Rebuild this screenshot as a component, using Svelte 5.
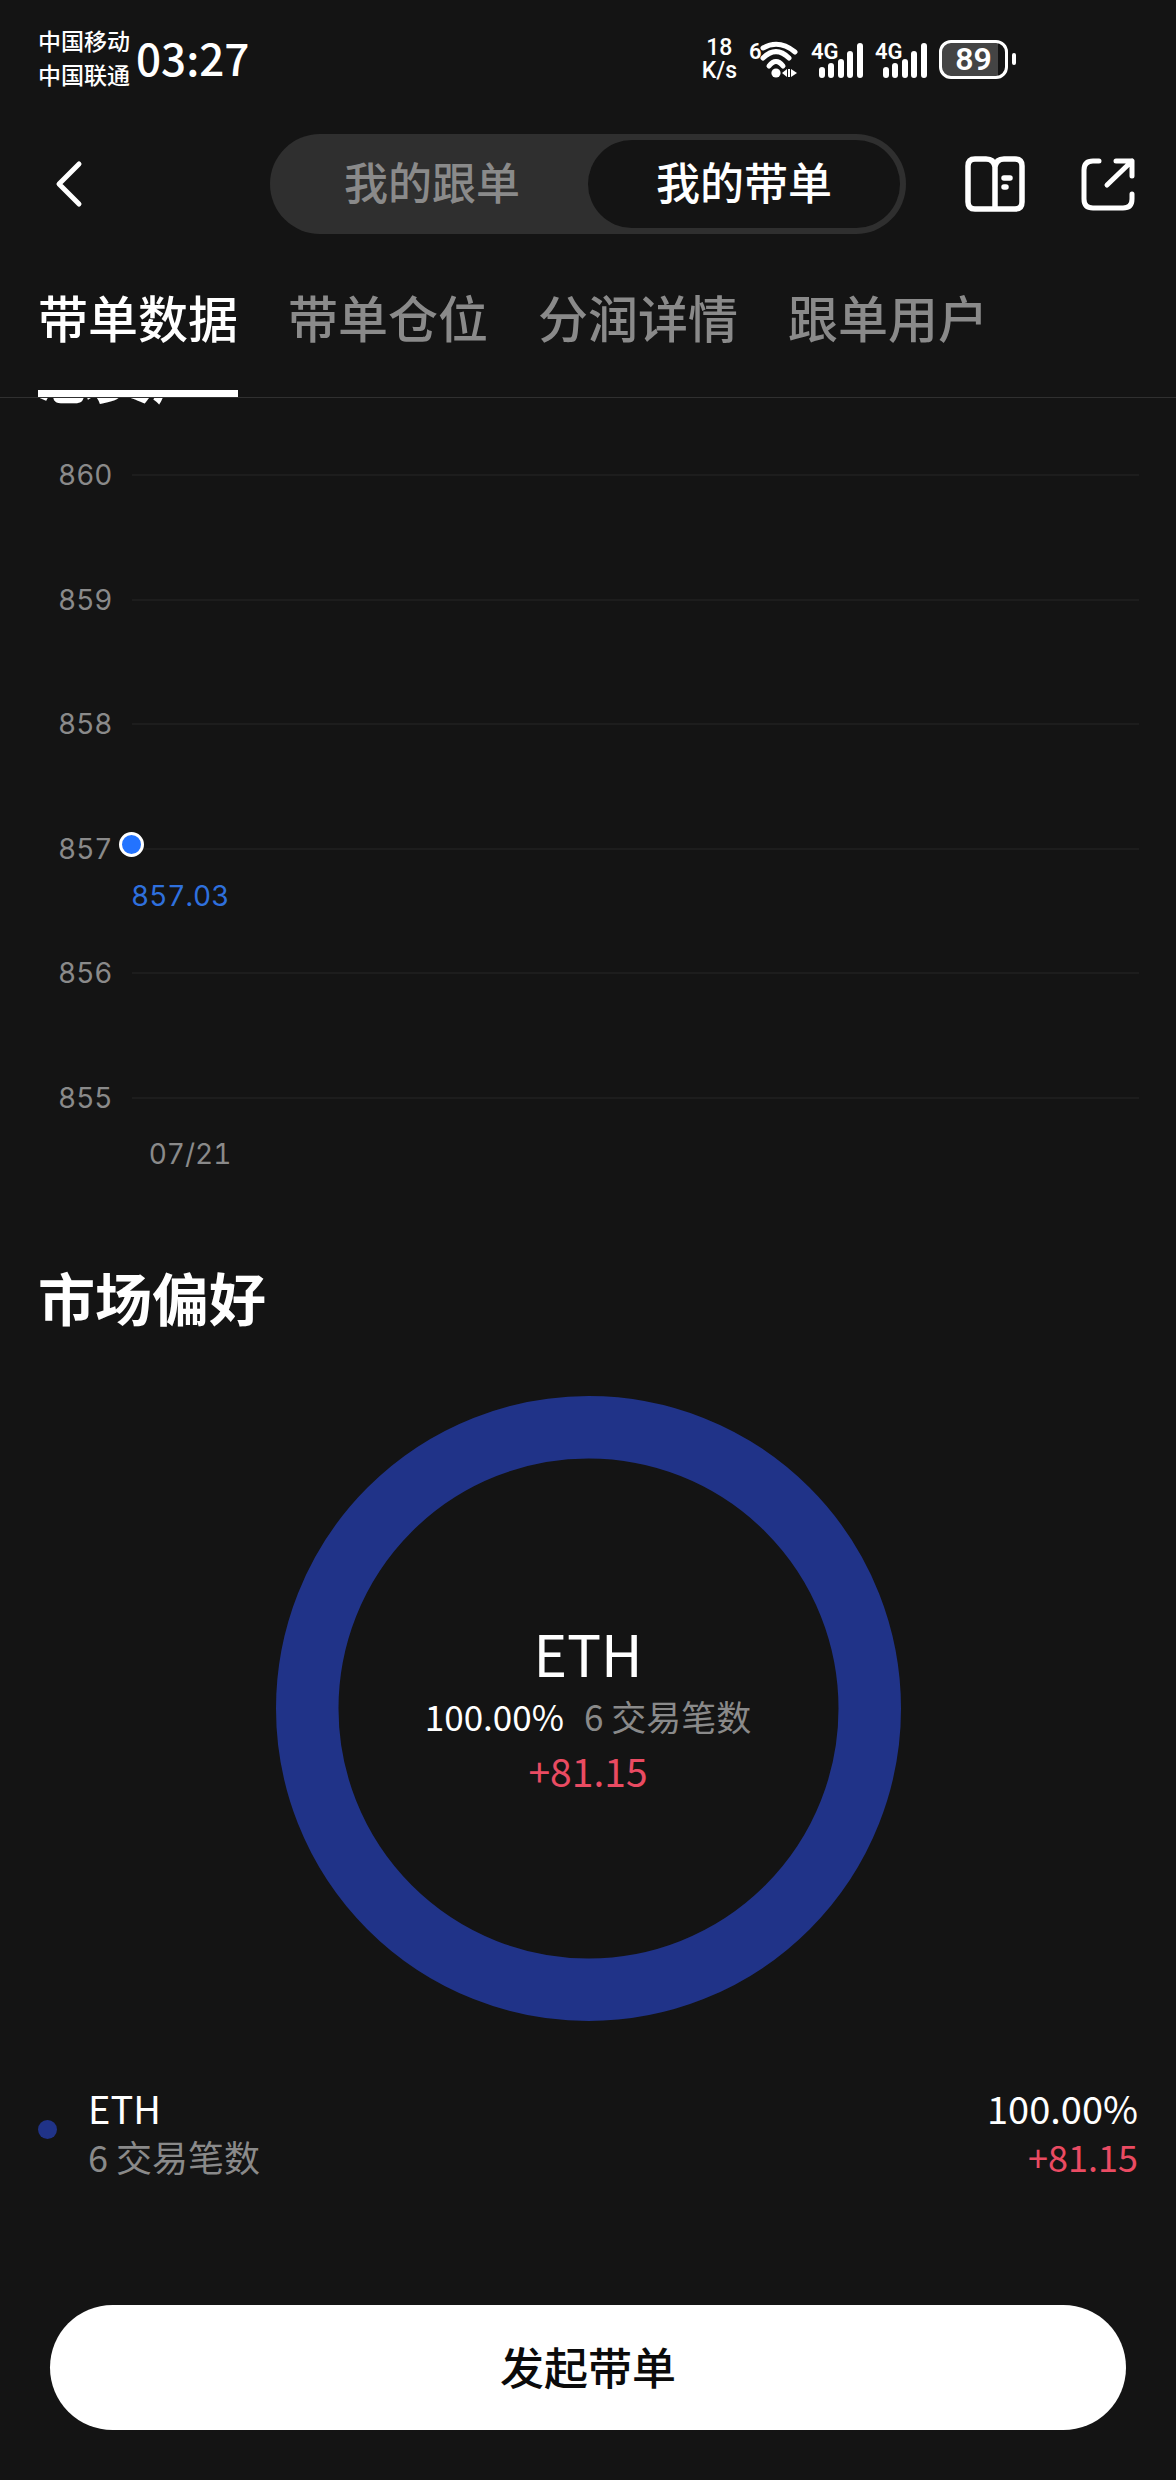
<script lang="ts">
  const topTabs = ['我的跟单', '我的带单'];
  const subTabs = ['带单数据', '带单仓位', '分润详情', '跟单用户'];
  const ticks = [860, 859, 858, 857, 856, 855];
  const point = { date: '07/21', value: 857.03 };
  const markets = [
    { name: 'ETH', share: '100.00%', trades: 6, pnl: '+81.15', color: '#203388' },
  ];

  let topTab = $state(1);
  let subTab = $state(0);

  const max = ticks[0];
  const min = ticks[ticks.length - 1];
  const pointTop = ((max - point.value) / (max - min)) * 100;
</script>

{#snippet signal()}
  <svg class="signal" width="52" height="38" viewBox="0 0 52 38" aria-hidden="true">
    <text x="0" y="19">4G</text>
    <path d="M11 30v5M20 26v9M30 22v13M39 14v21M49 6v29" fill="none" stroke="#fff" stroke-width="6" stroke-linecap="round" />
  </svg>
{/snippet}

<div class="app">
  <div class="status-bar">
    <div class="carriers">
      <span>中国移动</span>
      <span>中国联通</span>
    </div>
    <time class="clock">03:27</time>
    <div class="status-icons">
      <div class="net-speed">
        <span>18</span>
        <span>K/s</span>
      </div>
      <svg class="wifi" width="50" height="38" viewBox="0 0 50 38" aria-hidden="true">
        <text x="0" y="19">6</text>
        <g fill="none" stroke="#fff" stroke-width="5" stroke-linecap="round">
          <path d="M14 8Q30-1 46 12" />
          <path d="M14 18Q27 5 40 18" />
          <path d="M20 26Q27 17 34 26" />
        </g>
        <circle cx="27" cy="33" r="4.600" fill="#fff" />
        <path d="M38 29v8l-5-4zM39 29h2v8h-2zM42 29l6 4-6 4z" fill="#fff" />
      </svg>
      {@render signal()}
      {@render signal()}
      <div class="battery">
        <span>89</span>
      </div>
    </div>
  </div>

  <header class="header">
    <button class="icon-btn" aria-label="返回">
      <svg width="46" height="48" viewBox="0 0 46 48" fill="none" stroke="#fff" stroke-width="5" stroke-linecap="round" stroke-linejoin="round">
        <path d="M38 4 18 24l20 20" />
      </svg>
    </button>
    <div class="segment">
      {#each topTabs as label, i}
        <button class:active={topTab === i} onclick={() => (topTab = i)}>{label}</button>
      {/each}
    </div>
    <div class="actions">
      <button class="icon-btn" aria-label="指南">
        <svg width="60" height="56" viewBox="0 0 60 56" fill="none" stroke="#fff" stroke-width="5.500" stroke-linecap="round" stroke-linejoin="round">
          <path d="M30 11Q29 3 21 3H10Q3 3 3 10v36q0 7 7 7h40q7 0 7-7V10q0-7-7-7H39Q31 3 30 11v42M39 22h6M39 31h2" />
        </svg>
      </button>
      <button class="icon-btn" aria-label="分享">
        <svg width="54" height="56" viewBox="0 0 54 56" fill="none" stroke="#fff" stroke-width="5" stroke-linecap="round" stroke-linejoin="round">
          <path d="M18 5h-6q-9 0-9 9v29q0 9 9 9h30q9 0 9-9v-5M35 5h16v15M51 5 26 29" />
        </svg>
      </button>
    </div>
  </header>

  <nav class="tabs">
    {#each subTabs as label, i}
      <button class:active={subTab === i} onclick={() => (subTab = i)}>{label}</button>
    {/each}
  </nav>

  <main class="content">
    <section class="assets">
      <div class="scrolled-title">
        <h2>总资产</h2>
      </div>
      <div class="chart">
        <div class="plot">
          {#each ticks as tick}
            <div class="tick">
              <span>{tick}</span>
              <i></i>
            </div>
          {/each}
          <div class="point" style="top: {pointTop}%">
            <span>{point.value}</span>
          </div>
        </div>
        <div class="date">{point.date}</div>
      </div>
    </section>

    <section class="market">
      <h2>市场偏好</h2>
      <div class="donut">
        <svg viewBox="0 0 100 100" aria-hidden="true">
          <circle cx="50" cy="50" r="45" fill="none" stroke={markets[0].color} stroke-width="10" />
        </svg>
        <div class="donut-label">
          <strong>{markets[0].name}</strong>
          <p><span>{markets[0].share}</span><span class="muted">{markets[0].trades} 交易笔数</span></p>
          <em>{markets[0].pnl}</em>
        </div>
      </div>
      <ul class="legend">
        {#each markets as m}
          <li>
            <span class="dot" style="background: {m.color}"></span>
            <div class="legend-name">
              <b>{m.name}</b>
              <span class="muted">{m.trades} 交易笔数</span>
            </div>
            <div class="legend-value">
              <b>{m.share}</b>
              <span class="loss">{m.pnl}</span>
            </div>
          </li>
        {/each}
      </ul>
    </section>
  </main>

  <footer class="footer">
    <button class="start-btn">发起带单</button>
  </footer>
</div>

<style>
  :global(body) {
    background: #141414;
  }

  .app {
    display: flex;
    flex-direction: column;
    min-height: 100vh;
    background: #141414;
    color: #fff;
    font-family: "Noto Sans CJK SC", "Noto Sans", sans-serif;
  }

  button {
    padding: 0;
    border: 0;
    background: none;
    color: inherit;
    font: inherit;
    cursor: pointer;
  }

  svg {
    display: block;
    overflow: visible;
  }

  h2 {
    margin: 0;
    font-size: 57px;
    font-weight: 700;
    line-height: 64px;
  }

  .status-bar {
    display: flex;
    align-items: center;
    height: 118px;
    padding: 0 168px 0 38px;
  }

  .carriers {
    display: flex;
    flex-direction: column;
    padding-bottom: 4px;
    font-size: 23px;
    font-weight: 500;
    line-height: 34px;
  }

  .clock {
    margin-left: 6px;
    padding-bottom: 4px;
    font-size: 44px;
    font-weight: 500;
    line-height: 56px;
  }

  .status-icons {
    display: flex;
    align-items: center;
    gap: 12px;
    margin-left: auto;
  }

  .net-speed {
    display: flex;
    flex-direction: column;
    align-items: center;
    font-family: Roboto, sans-serif;
    font-size: 23px;
    font-weight: 500;
    line-height: 23px;
  }

  .wifi text,
  .signal text {
    fill: #fff;
    font-family: Roboto, sans-serif;
    font-size: 22px;
    font-weight: 600;
  }

  .battery {
    position: relative;
    display: flex;
    align-items: center;
    justify-content: center;
    box-sizing: border-box;
    width: 69px;
    height: 39px;
    border: 3px solid #fff;
    border-radius: 12px;
    background: linear-gradient(90deg, #444 89%, transparent 89%);
    font-family: Roboto, sans-serif;
    font-size: 32px;
    font-weight: 600;
    line-height: 34px;
  }

  .battery::after {
    content: "";
    position: absolute;
    right: -11px;
    width: 4px;
    height: 12px;
    border-radius: 2px;
    background: #fff;
  }

  .header {
    display: grid;
    grid-template-columns: 1fr 636px 1fr;
    align-items: center;
    height: 132px;
    padding: 0 41px;
  }

  .icon-btn {
    justify-self: start;
  }

  .segment {
    display: flex;
    box-sizing: border-box;
    height: 100px;
    padding: 6px;
    border-radius: 50px;
    background: #2f2f2f;
  }

  .segment button {
    flex: 1;
    padding-bottom: 6px;
    border-radius: 44px;
    color: #8a8a8a;
    font-size: 44px;
    font-weight: 500;
  }

  .segment button.active {
    background: #141414;
    color: #fff;
  }

  .actions {
    display: flex;
    justify-content: flex-end;
    gap: 56px;
  }

  .tabs {
    display: flex;
    gap: 50px;
    height: 147px;
    padding: 0 38px;
    border-bottom: 1px solid #303030;
  }

  .tabs button {
    box-sizing: border-box;
    padding-bottom: 16px;
    border-top: 7px solid transparent;
    border-bottom: 7px solid transparent;
    color: #8a8a8a;
    font-size: 50px;
    font-weight: 500;
  }

  .tabs button.active {
    border-bottom-color: #fff;
    color: #fff;
  }

  .content {
    flex: 1;
  }

  .scrolled-title {
    display: flex;
    align-items: flex-end;
    box-sizing: border-box;
    height: 14px;
    padding: 0 38px 7px;
    overflow: hidden;
  }

  .chart {
    padding: 63px 37px 0 58px;
    color: #8a8a8a;
    font-family: Inter, sans-serif;
    font-size: 28px;
    font-variant-numeric: tabular-nums;
    line-height: 36px;
  }

  .plot {
    position: relative;
    display: flex;
    flex-direction: column;
    justify-content: space-between;
    height: 623px;
  }

  .tick {
    display: flex;
    align-items: center;
    height: 0;
  }

  .tick span {
    width: 74px;
  }

  .tick i {
    flex: 1;
    height: 2px;
    background: #1d1d1d;
  }

  .point {
    position: absolute;
    left: 61px;
    box-sizing: border-box;
    width: 25px;
    height: 25px;
    margin-top: -13px;
    border: 3px solid #fff;
    border-radius: 50%;
    background: #2373ff;
  }

  .point span {
    position: absolute;
    top: 43px;
    left: 9px;
    color: #2f70dd;
  }

  .date {
    width: 264px;
    padding-top: 38px;
    text-align: center;
  }

  .market {
    padding: 92px 38px 0;
  }

  .donut {
    display: grid;
    place-items: center;
    width: 625px;
    margin: 68px auto 0;
  }

  .donut > * {
    grid-area: 1 / 1;
  }

  .donut svg {
    width: 100%;
  }

  .donut-label {
    display: flex;
    flex-direction: column;
    align-items: center;
    padding-bottom: 6px;
    font-size: 35px;
    line-height: 56px;
  }

  .donut-label strong {
    font-size: 57px;
    font-weight: 400;
    line-height: 72px;
  }

  .donut-label p {
    display: flex;
    gap: 20px;
    margin: 0;
  }

  .donut-label em {
    font-size: 39px;
    font-style: normal;
    line-height: 52px;
    color: #ea4b62;
  }

  .muted {
    color: #8a8a8a;
  }

  .loss {
    color: #ea4b62;
  }

  .legend {
    margin: 63px 0 0;
    padding: 0;
    list-style: none;
  }

  .legend li {
    display: flex;
    align-items: center;
  }

  .dot {
    width: 19px;
    height: 19px;
    margin: 0 31px 6px 0;
    border-radius: 50%;
  }

  .legend-name,
  .legend-value {
    display: flex;
    flex-direction: column;
    font-size: 36px;
    line-height: 48px;
  }

  .legend-value {
    margin-left: auto;
    align-items: flex-end;
  }

  .legend b {
    font-size: 38px;
    font-weight: 400;
  }

  .footer {
    padding: 0 50px 50px;
  }

  .start-btn {
    display: block;
    width: 100%;
    height: 125px;
    padding-bottom: 4px;
    border-radius: 63px;
    background: #fff;
    color: #0b0b0b;
    font-size: 44px;
    font-weight: 500;
  }
</style>
